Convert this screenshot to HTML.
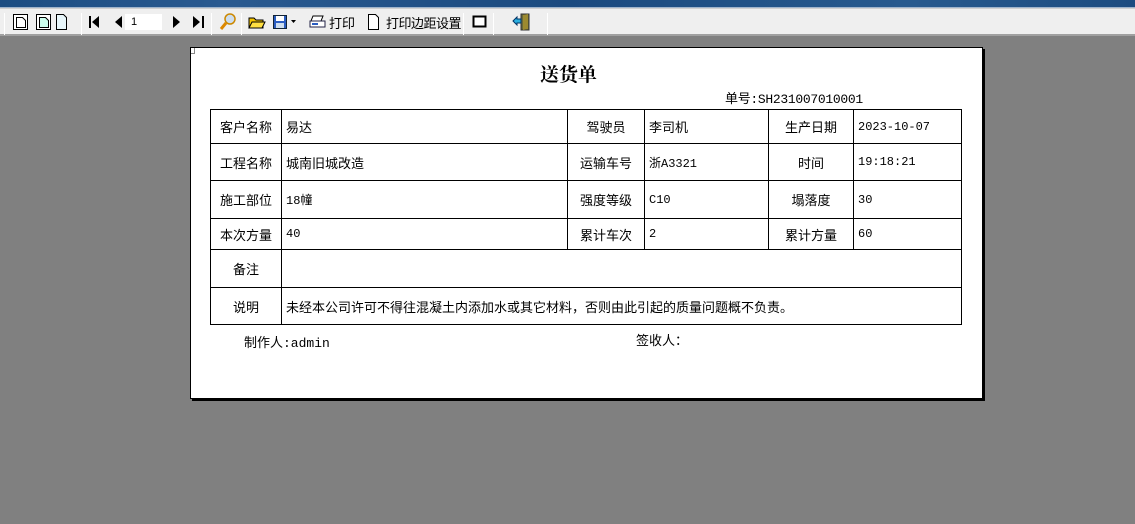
<!DOCTYPE html>
<html><head><meta charset="utf-8"><style>
*{margin:0;padding:0;box-sizing:border-box}
body{width:1135px;height:524px;background:#808080;position:relative;overflow:hidden;font-family:"Liberation Sans","WenQuanYi Zen Hei","Noto Sans CJK SC",sans-serif;font-size:13px;color:#000}
.tb{position:absolute;left:0;top:0;width:1135px;height:8px;background:linear-gradient(90deg,#1c4d82,#2a5a90 20%,#1b4a7f 50%,#285a8e 80%,#1d4c80);border-bottom:1px solid #9fb4cc}
.bar{position:absolute;left:0;top:8px;width:1135px;height:28px;background:#efefef;border-bottom:2px solid #a0a0a0;border-top:1px solid #d0d0d0}
.a{position:absolute}
.sep{position:absolute;top:4px;width:1px;height:22px;background:#a8a8a8;border-right:1px solid #fff}
.page{position:absolute;left:190px;top:47px;width:793px;height:352px;background:#fff;border:1px solid #000;box-shadow:2px 2px 0 #000}
table{position:absolute;left:19px;top:61px;border-collapse:collapse;table-layout:fixed}
td{border:1px solid #000;padding:0 4px;font-size:13px;white-space:nowrap}
td.c{text-align:center}
.m{font-family:"Liberation Mono","WenQuanYi Zen Hei",monospace;font-size:12px}
</style></head><body>
<div class="tb"></div>
<div class="bar">
 <div class="sep" style="left:4px"></div>
 <svg class="a" style="left:12px;top:4px" width="60" height="18" viewBox="0 0 60 18">
  <g fill="#fff" stroke="#000" stroke-width="1"><rect x="1.5" y="1.5" width="14" height="15"/><path d="M4.5 4.5h6l3 3v7h-9z"/><path d="M24.5 1.5h14v15h-14z"/><path d="M27.5 4.5h6l3 3v7h-9z" fill="#cfe"/><path d="M44.5 1.5h7l3 3v12h-10z" fill="#e8f6fa"/></g>
 </svg>
 <div class="sep" style="left:81px"></div>
 <svg class="a" style="left:89px;top:6px" width="40" height="14"><path d="M1 1v12" stroke="#000" stroke-width="2"/><path d="M10 1v12L3 7z" fill="#000"/><path d="M33 1v12L26 7z" fill="#000"/></svg>
 <div class="a" style="left:125px;top:5px;width:37px;height:16px;background:#fff;font-size:11px;padding-left:6px;line-height:16px">1</div>
 <svg class="a" style="left:170px;top:6px" width="40" height="14"><path d="M3 1v12l7-6z" fill="#000"/><path d="M23 1v12l7-6z" fill="#000"/><path d="M33 1v12" stroke="#000" stroke-width="2"/></svg>
 <div class="sep" style="left:211px"></div>
 <svg class="a" style="left:219px;top:3px" width="18" height="20"><circle cx="11" cy="7" r="5" fill="#cde" stroke="#c80" stroke-width="1.5"/><path d="M7 11l-5 6" stroke="#d80" stroke-width="3"/></svg>
 <div class="sep" style="left:241px"></div>
 <svg class="a" style="left:248px;top:5px" width="18" height="16"><path d="M1 4h5l2 2h7v8H1z" fill="#f5c400" stroke="#000"/><path d="M4 8h13l-3 6H1z" fill="#ffdf40" stroke="#000"/></svg>
 <svg class="a" style="left:272px;top:5px" width="26" height="16"><rect x="1.5" y="1.5" width="13" height="13" fill="#2a5cc0" stroke="#123"/><rect x="4" y="2" width="8" height="5" fill="#fff"/><rect x="4" y="9" width="8" height="5" fill="#cde"/><path d="M19 6h5l-2.5 3z" fill="#000"/></svg>
 <svg class="a" style="left:309px;top:5px" width="18" height="16"><path d="M4 2h10l-2 5H2z" fill="#fff" stroke="#000"/><path d="M1 7h15v6H1z" fill="#fff" stroke="#224"/><path d="M3 10h6" stroke="#2a5cc0" stroke-width="2"/></svg>
 <div class="a" style="left:329px;top:4px;font-size:13px">打印</div>
 <svg class="a" style="left:367px;top:4px" width="14" height="18"><path d="M1.5 1.5h7l3 3v12h-10z" fill="#fff" stroke="#000"/></svg>
 <div class="a" style="left:386px;top:4px;font-size:13px;letter-spacing:-0.5px">打印边距设置</div>
 <div class="sep" style="left:463px"></div>
 <svg class="a" style="left:472px;top:6px" width="16" height="14"><rect x="1.5" y="1.5" width="12" height="10" fill="#fff" stroke="#000" stroke-width="2"/></svg>
 <div class="sep" style="left:493px"></div>
 <svg class="a" style="left:512px;top:3px" width="20" height="20"><path d="M9 2h8v16H9z" fill="#6a6a3a" stroke="#333"/><path d="M11 3l5-1v15l-5 1z" fill="#9c8a30"/><path d="M1 9l4-4v2h4v4H5v2z" fill="#2ab0e0" stroke="#036"/></svg>
 <div class="sep" style="left:547px"></div>
</div>
<div class="page">
 <div class="a" style="left:0;top:0;width:4px;height:6px;border:1px solid #888;border-top:0;border-left:0"></div>
 <div class="a" style="left:349px;top:12px;font-size:19px;font-weight:bold;font-family:'Noto Serif CJK SC','WenQuanYi Zen Hei',serif">送货单</div>
 <div class="a m" style="left:534px;top:40px;font-size:13px;letter-spacing:-0.3px">单号:SH231007010001</div>
 <table>
  <colgroup><col style="width:71px"><col style="width:286px"><col style="width:77px"><col style="width:124px"><col style="width:85px"><col style="width:108px"></colgroup>
  <tr style="height:34px"><td class="c">客户名称</td><td>易达</td><td class="c">驾驶员</td><td>李司机</td><td class="c">生产日期</td><td class="m">2023-10-07</td></tr>
  <tr style="height:37px"><td class="c">工程名称</td><td>城南旧城改造</td><td class="c">运输车号</td><td class="m">浙A3321</td><td class="c">时间</td><td class="m">19:18:21</td></tr>
  <tr style="height:38px"><td class="c">施工部位</td><td class="m">18幢</td><td class="c">强度等级</td><td class="m">C10</td><td class="c">塌落度</td><td class="m">30</td></tr>
  <tr style="height:31px"><td class="c">本次方量</td><td class="m">40</td><td class="c">累计车次</td><td class="m">2</td><td class="c">累计方量</td><td class="m">60</td></tr>
  <tr style="height:38px"><td class="c">备注</td><td colspan="5"></td></tr>
  <tr style="height:37px"><td class="c">说明</td><td colspan="5">未经本公司许可不得往混凝土内添加水或其它材料，否则由此引起的质量问题概不负责。</td></tr>
 </table>
 <div class="a m" style="left:53px;top:284px;font-size:13px">制作人:admin</div>
 <div class="a" style="left:445px;top:282px;font-size:13px">签收人：</div>
</div>
</body></html>
